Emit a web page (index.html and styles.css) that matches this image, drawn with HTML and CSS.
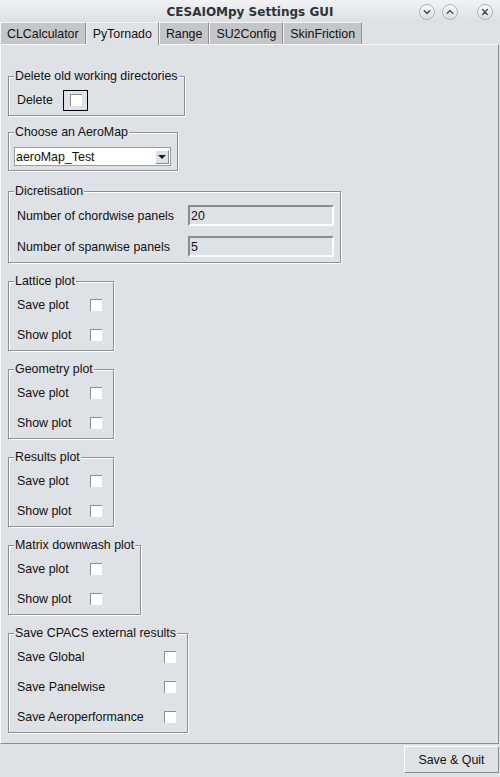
FILE: index.html
```html
<!DOCTYPE html>
<html>
<head>
<meta charset="utf-8">
<title>CESAIOMpy Settings GUI</title>
<link rel="stylesheet" href="styles.css">
</head>
<body>
<div class="window">
  <header class="titlebar">
    <span class="title">CESAIOMpy Settings GUI</span>
    <div class="wm-buttons">
      <span class="wm-btn"><svg viewBox="0 0 14 14"><path d="M4.2 5.8 L7 8.6 L9.8 5.8" /></svg></span>
      <span class="wm-btn"><svg viewBox="0 0 14 14"><path d="M4.2 8.2 L7 5.4 L9.8 8.2" /></svg></span>
      <span class="wm-btn wm-close"><svg viewBox="0 0 14 14"><path d="M4.6 4.6 L9.4 9.4 M9.4 4.6 L4.6 9.4" /></svg></span>
    </div>
  </header>

  <nav class="tabs">
    <div class="tab">CLCalculator</div>
    <div class="tab active">PyTornado</div>
    <div class="tab">Range</div>
    <div class="tab">SU2Config</div>
    <div class="tab">SkinFriction</div>
  </nav>

  <main class="panel">
    <fieldset class="group">
      <legend>Delete old working directories</legend>
      <div class="rows rows-delete">
        <span>Delete</span>
        <span class="focus"><span class="check"></span></span>
      </div>
    </fieldset>

    <fieldset class="group group-tight">
      <legend>Choose an AeroMap</legend>
      <div class="combo">
        <span class="combo-text">aeroMap_Test</span>
        <span class="combo-arrow"></span>
      </div>
    </fieldset>

    <fieldset class="group group-loose">
      <legend>Dicretisation</legend>
      <div class="rows rows-entry">
        <span>Number of chordwise panels</span>
        <span class="entry">20</span>
        <span>Number of spanwise panels</span>
        <span class="entry">5</span>
      </div>
    </fieldset>

    <fieldset class="group">
      <legend>Lattice plot</legend>
      <div class="rows rows-plot">
        <span>Save plot</span><span class="check"></span>
        <span>Show plot</span><span class="check"></span>
      </div>
    </fieldset>

    <fieldset class="group">
      <legend>Geometry plot</legend>
      <div class="rows rows-plot">
        <span>Save plot</span><span class="check"></span>
        <span>Show plot</span><span class="check"></span>
      </div>
    </fieldset>

    <fieldset class="group">
      <legend>Results plot</legend>
      <div class="rows rows-plot">
        <span>Save plot</span><span class="check"></span>
        <span>Show plot</span><span class="check"></span>
      </div>
    </fieldset>

    <fieldset class="group">
      <legend>Matrix downwash plot</legend>
      <div class="rows rows-plot">
        <span>Save plot</span><span class="check"></span>
        <span>Show plot</span><span class="check"></span>
      </div>
    </fieldset>

    <fieldset class="group">
      <legend>Save CPACS external results</legend>
      <div class="rows rows-cpacs">
        <span>Save Global</span><span class="check"></span>
        <span>Save Panelwise</span><span class="check"></span>
        <span>Save Aeroperformance</span><span class="check"></span>
      </div>
    </fieldset>
  </main>

  <footer class="footer">
    <button class="btn">Save &amp; Quit</button>
  </footer>
</div>
</body>
</html>
```

FILE: styles.css
```css
* {
  box-sizing: border-box;
}

html,
body {
  margin: 0;
  padding: 0;
}

body {
  width: 500px;
  height: 777px;
  overflow: hidden;
  background: #dee2e6;
  color: #111;
  font-family: "Liberation Sans", Arial, sans-serif;
  font-size: 12.4px;
}

.window {
  display: flex;
  flex-direction: column;
  height: 777px;
}

/* ---------- title bar ---------- */
.titlebar {
  height: 22px;
  display: grid;
  grid-template-columns: 1fr auto 1fr;
  align-items: center;
  background: linear-gradient(#f0f2f4, #dde0e3);
}

.title {
  grid-column: 2;
  font-family: "DejaVu Sans", sans-serif;
  font-weight: bold;
  font-size: 12px;
  color: #2e3436;
  padding-top: 2px;
}

.wm-buttons {
  grid-column: 3;
  justify-self: end;
  display: flex;
  align-items: center;
  padding-right: 7px;
  padding-top: 2px;
}

.wm-btn {
  width: 16px;
  height: 16px;
  margin-left: 7px;
  border-radius: 50%;
  border: 1px solid #b0b3b7;
  background: linear-gradient(#f8f9fa, #dadde0);
  display: flex;
  align-items: center;
  justify-content: center;
}

.wm-close {
  margin-left: 19px;
}

.wm-btn svg {
  width: 14px;
  height: 14px;
  fill: none;
  stroke: #4a4d50;
  stroke-width: 1.4;
  stroke-linecap: round;
  stroke-linejoin: round;
}

/* ---------- tabs ---------- */
.tabs {
  display: flex;
  height: 22px;
}

.tab {
  height: 22px;
  padding: 0 6px;
  display: flex;
  align-items: center;
  background: #c4c6c9;
  border-top: 1px solid #f4f5f6;
  border-left: 1px solid #f4f5f6;
  border-right: 1px solid #8b8d90;
}

.tab.active {
  background: #dee2e6;
  height: 23px;
  margin-bottom: -1px;
  position: relative;
  z-index: 1;
}

/* ---------- panel ---------- */
.panel {
  width: 499px;
  height: 700px;
  border-top: 1px solid #fafbfc;
  border-left: 1px solid #fafbfc;
  border-right: 1px solid #8b8d90;
  border-bottom: 1px solid #8b8d90;
  padding: 24px 0 0 7px;
  display: flex;
  flex-direction: column;
  align-items: flex-start;
  gap: 11px;
}

.group {
  margin: 0;
  padding: 0;
  min-width: 0;
  border: 1px solid #8e9093;
  box-shadow: inset 1px 1px 0 #fff, 1px 1px 0 #fff;
}

.group-tight {
  margin-top: -2px;
}

.group-loose {
  margin-top: 2px;
}

.group legend {
  line-height: 15px;
  padding: 0 1px;
  margin: 0 5px 0 5px;
  background: #dee2e6;
}

.rows {
  display: grid;
  align-items: center;
  margin: 1px 11px 0 8px;
}

.rows-delete {
  grid-template-columns: 46px 25px;
  grid-auto-rows: 30px;
}

.rows-plot {
  grid-template-columns: 73px 12px;
  grid-auto-rows: 30px;
}

.rows-cpacs {
  grid-template-columns: 147px 12px;
  grid-auto-rows: 30px;
}

.rows-entry {
  grid-template-columns: 171px 146px;
  grid-auto-rows: 31px;
  margin-right: 6px;
}

.check {
  width: 12px;
  height: 12px;
  background: #fff;
  border-top: 1px solid #8d8f92;
  border-left: 1px solid #8d8f92;
}

.focus {
  width: 25px;
  height: 21px;
  border: 1px solid #000;
  display: flex;
  align-items: center;
  justify-content: center;
}

.entry {
  height: 21px;
  padding-left: 1px;
  display: flex;
  align-items: center;
  background: #dee2e6;
  border-style: solid;
  border-width: 2px;
  border-color: #898b8e #fbfbfb #fbfbfb #898b8e;
}

/* ---------- combobox ---------- */
.combo {
  width: 157px;
  height: 19px;
  margin: 7px 6px 4px 5px;
  display: flex;
  align-items: center;
  background: #fff;
  border: 1px solid #9a9da0;
}

.combo-text {
  flex: 1;
  padding-left: 1px;
}

.combo-arrow {
  width: 14px;
  height: 14px;
  margin-right: 1px;
  display: flex;
  align-items: center;
  justify-content: center;
  background: #dee2e6;
  border: 1px solid;
  border-color: #fff #8b8d90 #8b8d90 #fff;
}

.combo-arrow::after {
  content: "";
  border-left: 4px solid transparent;
  border-right: 4px solid transparent;
  border-top: 4px solid #1e1e1e;
  margin-top: 1px;
}

/* ---------- footer ---------- */
.footer {
  flex: 1;
  display: flex;
  justify-content: flex-end;
  align-items: flex-start;
  padding: 2px 1px 0 0;
}

.btn {
  width: 95px;
  height: 27px;
  padding: 0;
  font: inherit;
  color: #111;
  background: #dee2e6;
  border-radius: 0;
  border-style: solid;
  border-width: 1px;
  border-color: #fff #8b8d90 #8b8d90 #fff;
}
```
